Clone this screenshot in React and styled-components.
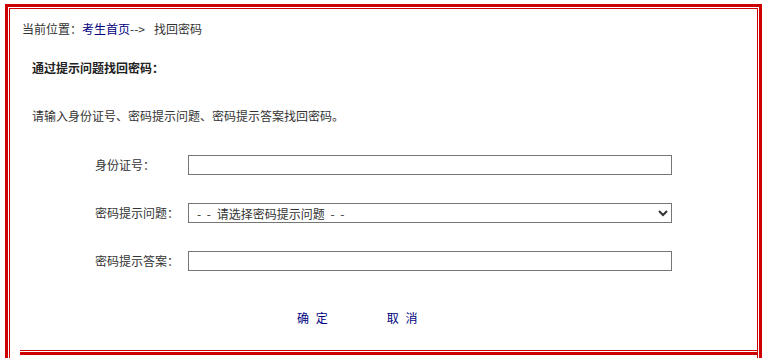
import React from "react";
import styled, { createGlobalStyle } from "styled-components";

const Global = createGlobalStyle`
  html, body { margin: 0; padding: 0; overflow: hidden; background: #fff; }
  body {
    font-family: "Noto Sans CJK SC", "Liberation Sans", sans-serif;
    font-size: 12px;
    color: #333;
  }
`;

const Outer = styled.div`
  margin: 4px 3px 0 5px;
  border: 3px solid #cc0000;
  border-bottom: none;
  padding: 1px 1px 0 1px;
  background: #fff;
`;

const Inner = styled.div`
  border: 1px solid #cc0000;
  border-bottom: none;
  padding: 10px 0 20px 0;
  display: flex;
  flex-direction: column;
`;

const Line = styled.div`
  height: 20px;
  line-height: 20px;
  white-space: nowrap;
  padding-left: ${(p) => p.$indent}px;
  margin-top: ${(p) => p.$top || 0}px;
  font-weight: ${(p) => (p.$bold ? 700 : 400)};
  color: ${(p) => (p.$bold ? "#222" : "#333")};
`;

const Link = styled.a`
  color: #000080;
  text-decoration: none;
`;

const Arrow = styled.span`
  display: inline-block;
  width: 24px;
`;

const Form = styled.div`
  margin-top: 29px;
  margin-left: 85px;
  display: grid;
  grid-template-columns: 93px 484px;
  row-gap: 28px;
  align-items: center;
`;

const Label = styled.label`
  height: 20px;
  line-height: 19px;
  white-space: nowrap;
`;

const TextInput = styled.input`
  box-sizing: border-box;
  width: 484px;
  height: 20px;
  margin: 0;
  border: 1px solid #767676;
  border-radius: 0;
  padding: 0 3px;
  font: 12px "Noto Sans CJK SC", sans-serif;
  background: #fff;
`;

const Select = styled.select`
  box-sizing: border-box;
  width: 484px;
  height: 20px;
  margin: 0;
  border: 1px solid #767676;
  border-radius: 0;
  padding: 0 4px;
  font: 12px "Noto Sans CJK SC", sans-serif;
  word-spacing: 3px;
  color: #333;
  background: #fff;
`;

const Actions = styled.div`
  margin-top: 37px;
  padding-left: 287px;
  display: flex;
  gap: 59px;
  height: 20px;
  line-height: 20px;
`;

const ActionLink = styled.a`
  color: #000080;
  text-decoration: none;
  word-spacing: 4px;
  cursor: pointer;
`;

const Footer = styled.div`
  margin: 22px 0 0 10px;
  height: 1px;
  border-top: 1px solid #cc0000;
  border-bottom: 3px solid #cc0000;
`;

export default function App() {
  return (
    <>
      <Global />
      <Outer>
        <Inner>
          <Line $indent={12}>
            当前位置：<Link href="#">考生首页</Link>
            <Arrow>--&gt;</Arrow>找回密码
          </Line>
          <Line $indent={22} $top={19} $bold>
            通过提示问题找回密码：
          </Line>
          <Line $indent={22} $top={28}>
            请输入身份证号、密码提示问题、密码提示答案找回密码。
          </Line>
          <Form>
            <Label>身份证号：</Label>
            <TextInput type="text" />
            <Label>密码提示问题：</Label>
            <Select defaultValue="">
              <option value="">- - 请选择密码提示问题 - -</option>
            </Select>
            <Label>密码提示答案：</Label>
            <TextInput type="text" />
          </Form>
          <Actions>
            <ActionLink>确 定</ActionLink>
            <ActionLink>取 消</ActionLink>
          </Actions>
          <Footer />
        </Inner>
      </Outer>
    </>
  );
}
